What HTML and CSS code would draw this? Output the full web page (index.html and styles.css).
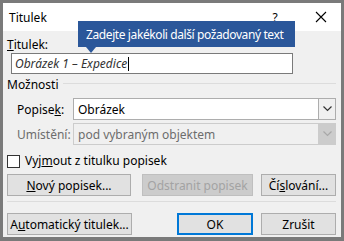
FILE: index.html
```html
<!DOCTYPE html>
<html lang="cs">
<head>
<meta charset="utf-8">
<link rel="stylesheet" href="styles.css">
</head>
<body>
<div class="dialog">
  <div class="titlebar">
    <span class="title">Titulek</span>
    <span class="help">?</span>
    <span class="close"><svg width="12" height="12" viewBox="0 0 12 12"><path d="M1 1 L11 11 M11 1 L1 11" stroke="#000" stroke-width="1.1" fill="none"/></svg></span>
  </div>
  <div class="content">
    <div class="lbl"><u>T</u>itulek:</div>
    <div class="textbox"><span class="itxt">Obrázek 1 – Expedice</span><span class="caret"></span></div>
    <div class="group-head"><span>Možnosti</span><span class="rule"></span></div>
    <div class="opts">
      <div class="olbl">Popise<u>k</u>:</div>
      <div class="combo"><span class="cval">Obrázek</span><span class="cbtn"><svg width="9" height="6" viewBox="0 0 9 6"><path d="M0.5 0.5 L4.5 4.5 L8.5 0.5" stroke="#333" stroke-width="1.2" fill="none"/></svg></span></div>
      <div class="olbl dis">Umístění:</div>
      <div class="combo disabled"><span class="cval">pod vybraným objektem</span><span class="cbtn"><svg width="9" height="6" viewBox="0 0 9 6"><path d="M0.5 0.5 L4.5 4.5 L8.5 0.5" stroke="#a8a8a8" stroke-width="1.2" fill="none"/></svg></span></div>
    </div>
    <div class="check"><span class="box"></span><span>Vyj<u>m</u>out z titulku popisek</span></div>
    <div class="btnrow">
      <span class="btn w-new"><u>N</u>ový popisek...</span>
      <span class="btn w-del disabled">Odstranit popisek</span>
      <span class="btn w-num">Čí<u>s</u>lování...</span>
    </div>
    <div class="sep"></div>
    <div class="btnrow bottom">
      <span class="btn w-auto">A<u>u</u>tomatický titulek...</span>
      <span class="btn w-ok primary">OK</span>
      <span class="btn w-cancel">Zrušit</span>
    </div>
  </div>
  <div class="tooltip">Zadejte jakékoli další požadovaný text<span class="tip"></span></div>
</div>
</body>
</html>
```
FILE: styles.css
```css
* { box-sizing: border-box; }
html, body { margin: 0; padding: 0; }
body {
  width: 344px;
  height: 241px;
  overflow: hidden;
  font-family: "Noto Sans", "DejaVu Sans", sans-serif;
  font-size: 12px;
  color: #000;
}
.dialog {
  position: relative;
  width: 344px;
  height: 241px;
  border: 3px solid #7a7a7a;
  border-bottom-width: 4px;
  background: #f0f0f0;
  display: flex;
  flex-direction: column;
}
.titlebar {
  height: 28px;
  background: #fff;
  display: flex;
  align-items: center;
  padding-left: 6px;
  flex: none;
}
.title { font-size: 12px; flex: 1; }
.help { width: 20px; margin-right: 26px; font-size: 12px; text-align: center; }
.close { width: 20px; margin-right: 10px; display: flex; justify-content: center; }
.content {
  padding: 6px 5px 0 4px;
  display: flex;
  flex-direction: column;
}
.lbl { line-height: 15px; }
.textbox {
  margin: 1px 0 0 4px;
  width: 282px;
  height: 21px;
  background: #fff;
  border: 1px solid #7a7a7a;
  display: flex;
  align-items: center;
  padding-left: 3px;
  font-style: italic;
  color: #333;
}
.caret { width: 1px; height: 14px; background: #000; margin-left: 1px; }
.group-head {
  margin-top: 3px;
  display: flex;
  align-items: center;
  line-height: 15px;
}
.rule { flex: 1; height: 1px; background: #dcdcdc; margin-left: 4px; margin-top: -2px; }
.opts {
  margin-top: 6px;
  display: grid;
  grid-template-columns: 56px 1fr;
  row-gap: 3px;
  padding-left: 10px;
}
.olbl { display: flex; align-items: center; }
.olbl.dis { color: #6d6d6d; }
.combo {
  height: 22px;
  border: 1px solid #adadad;
  background: #fff;
  display: flex;
  align-items: stretch;
}
.cval { flex: 1; padding-left: 4px; display: flex; align-items: center; }
.cbtn {
  width: 17px;
  border-left: 1px solid #adadad;
  background: #f0f0f0;
  display: flex;
  align-items: center;
  justify-content: center;
}
.combo.disabled { background: #f0f0f0; border-color: #cccccc; color: #6d6d6d; }
.combo.disabled .cbtn { background: #cccccc; border-left-color: #cccccc; }
.check {
  margin-top: 9px;
  display: flex;
  align-items: center;
  gap: 5px;
  line-height: 14px;
}
.box { width: 13px; height: 13px; border: 1px solid #333; background: #fff; flex: none; }
.btnrow { margin-top: 6px; display: flex; }
.btn {
  height: 22px;
  border: 1px solid #adadad;
  background: #e1e1e1;
  display: flex;
  align-items: center;
  justify-content: center;
}
.btn.disabled { background: #cccccc; border-color: #bfbfbf; color: #a3a3a3; }
.btn.primary { border: 2px solid #0078d7; }
.w-new { width: 124px; }
.w-del { width: 111px; margin-left: 11px; }
.w-num { width: 75px; margin-left: 8px; }
.w-auto { width: 125px; }
.w-ok { width: 76px; margin-left: 45px; }
.w-cancel { width: 75px; margin-left: 8px; }
.sep { margin-top: 5px; height: 1px; background: #dcdcdc; }
.btnrow.bottom { margin-top: 11px; }
.tooltip {
  position: absolute;
  left: 75px;
  top: 18px;
  width: 217px;
  height: 26px;
  background: #2b579a;
  color: #fff;
  font-size: 12px;
  letter-spacing: -0.4px;
  white-space: nowrap;
  display: flex;
  align-items: center;
  padding-left: 8px;
}
.tip {
  position: absolute;
  left: 8px;
  top: 26px;
  width: 0; height: 0;
  border-left: 5px solid transparent;
  border-right: 5px solid transparent;
  border-top: 6px solid #2b579a;
}
```
